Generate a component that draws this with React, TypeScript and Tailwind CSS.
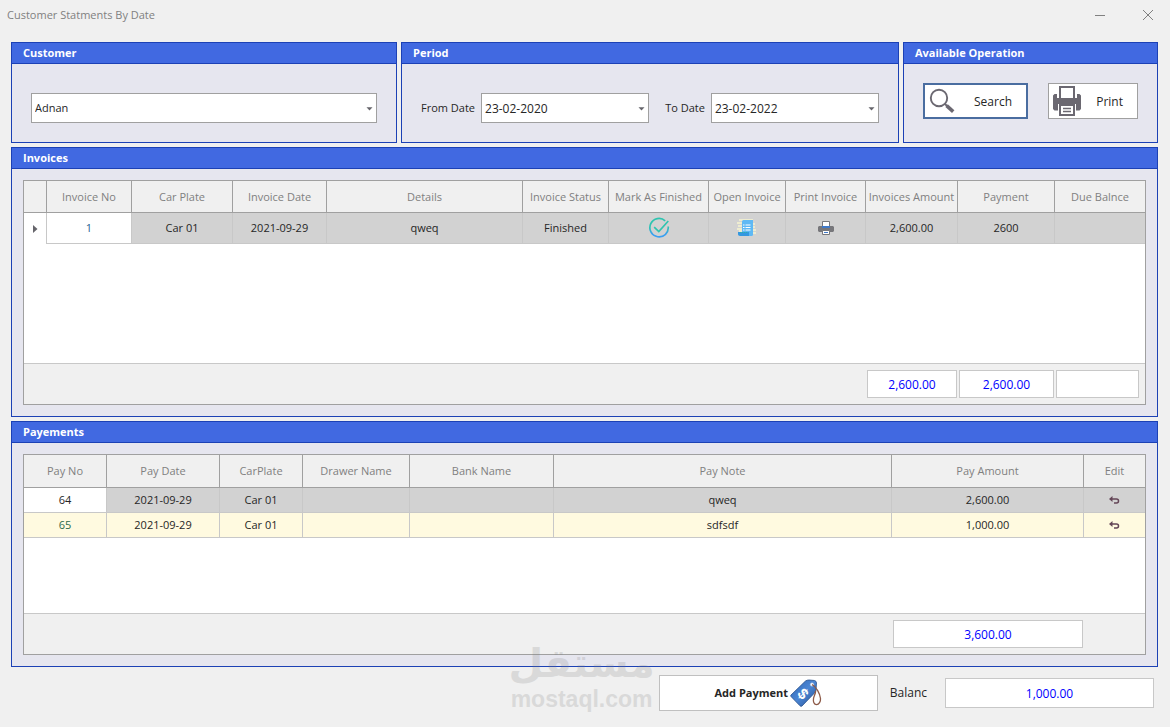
import React, { useState } from "react";

interface Column {
  title: string;
  width?: number;
}

const invoiceColumns: Column[] = [
  { title: "", width: 23 },
  { title: "Invoice No", width: 85 },
  { title: "Car Plate", width: 101 },
  { title: "Invoice Date", width: 94 },
  { title: "Details" },
  { title: "Invoice Status", width: 86 },
  { title: "Mark As Finished", width: 100 },
  { title: "Open Invoice", width: 77 },
  { title: "Print Invoice", width: 80 },
  { title: "Invoices Amount", width: 92 },
  { title: "Payment", width: 97 },
  { title: "Due Balnce", width: 90 },
];

const paymentColumns: Column[] = [
  { title: "Pay No", width: 83 },
  { title: "Pay Date", width: 113 },
  { title: "CarPlate", width: 83 },
  { title: "Drawer Name", width: 107 },
  { title: "Bank Name", width: 144 },
  { title: "Pay Note" },
  { title: "Pay Amount", width: 192 },
  { title: "Edit", width: 61 },
];

const payments = [
  { no: "64", date: "2021-09-29", plate: "Car 01", note: "qweq", amount: "2,600.00" },
  { no: "65", date: "2021-09-29", plate: "Car 01", note: "sdfsdf", amount: "1,000.00" },
];

/* ---------- icons ---------- */

const Caret = () => (
  <svg
    width="7"
    height="4"
    viewBox="0 0 7 4"
    className="pointer-events-none absolute right-1 top-1/2 -mt-px"
  >
    <path d="M0.5 0.3h6L3.5 3.5z" fill="#66656b" />
  </svg>
);

const SearchIcon = () => (
  <svg width="26" height="26" viewBox="0 0 26 26" fill="none" stroke="#6b6871">
    <circle cx="10" cy="10" r="8.2" strokeWidth="1.9" />
    <path d="M15.8 15.8l2.6 2.6" strokeWidth="2" />
    <path d="M17.6 17.6l6.6 6" strokeWidth="3.6" />
  </svg>
);

const PrinterIcon = () => (
  <svg width="28" height="30" viewBox="0 0 28 30">
    <path d="M0 9.5l1.5-1.5H4v5h20V8h2.5L28 9.500V23l-1.500 1.500H1.500L0 23z" fill="#6b6871" />
    <path d="M7 12V1h14v11" fill="#fff" stroke="#6b6871" strokeWidth="2" />
    <path d="M4 12h20v2H4z" fill="#6b6871" />
    <path d="M5 18h18v12H5z" fill="#fff" />
    <path d="M7 19h14v10H7z" fill="#fff" stroke="#6b6871" strokeWidth="2" />
    <path d="M10 22.500h8M10 25.500h8" stroke="#6b6871" strokeWidth="1.400" />
  </svg>
);

const CheckIcon = () => (
  <svg width="22" height="22" viewBox="0 0 22 22" fill="none">
    <defs>
      <linearGradient id="check" x1="0" y1="0" x2="0" y2="1">
        <stop offset="0.45" stopColor="#2ec4b0" />
        <stop offset="0.85" stopColor="#3a9ff0" />
      </linearGradient>
    </defs>
    <path
      d="M17.200 3.800A9.200 9.200 0 1 0 20.200 9.500"
      stroke="url(#check)"
      strokeWidth="1.700"
    />
    <path d="M6.200 10.200l4.600 4.300L20.300 4" stroke="#2ec4b0" strokeWidth="1.700" />
  </svg>
);

const InvoiceIcon = () => (
  <svg width="20" height="18" viewBox="0 0 20 18">
    <path
      d="M2 1h14M0 4h5M1 7h4M0 10h5M2 12h3M15 5h3M15 8h3M15 11h4M15 14h4"
      stroke="#f7f5cf"
      strokeWidth="1.600"
    />
    <path d="M5 2.500Q5 1 6.500 1H16v14.500q0 1.500-1.500 1.500H5z" fill="#5fb9f4" />
    <path d="M1 13h11v4H3q-2 0-2-2z" fill="#3498e0" />
    <path d="M3 13.500h8" stroke="#2bb5a8" strokeWidth="1" strokeDasharray="1 1" />
    <path d="M6 6h1.500M6 8.500h1.500M6 11h1.500M8.500 6h5M8.500 8.500h5M8.500 11h5" stroke="#fff" />
  </svg>
);

const SmallPrinterIcon = () => (
  <svg width="16" height="14" viewBox="0 0 16 14">
    <path d="M0 6l1-1h14l1 1v4l-1 1H1l-1-1z" fill="#77777b" />
    <path d="M4.500 0.500h7V7h-7z" fill="#fff" stroke="#77777b" />
    <path d="M4 5h8v2H4z" fill="#3f79c8" />
    <path d="M4.500 9.500h7v4h-7z" fill="#fff" stroke="#77777b" />
    <path d="M6 11.500h4" stroke="#3f79c8" />
  </svg>
);

const UndoIcon = () => (
  <svg width="11" height="8" viewBox="0 0 11 8">
    <path d="M0 3L3.500 0v6z" fill="#644657" />
    <path d="M2.500 3h5Q9.500 3 9.500 5T7.500 7H5" fill="none" stroke="#644657" strokeWidth="1.500" />
  </svg>
);

const TagIcon = () => (
  <svg width="32" height="28" viewBox="0 0 32 28">
    <defs>
      <linearGradient id="tag" x1="0" y1="0" x2="1" y2="1">
        <stop offset="0" stopColor="#2f66b4" />
        <stop offset="0.500" stopColor="#4b86d4" />
        <stop offset="1" stopColor="#244f94" />
      </linearGradient>
    </defs>
    <path
      d="M1 16L15.500 2Q17 1 19 1l5.500.5q2 .5 2 2.500l-.5 7q0 1.500-1.500 3L12 27q-1 .8-2-.2L1 17.500q-.6-.8 0-1.500z"
      fill="url(#tag)"
      stroke="#274f8c"
      strokeWidth="0.800"
    />
    <text
      x="13"
      y="20"
      textAnchor="middle"
      transform="rotate(45 13 15)"
      fill="#fff"
      fontFamily="Liberation Sans, sans-serif"
      fontWeight="bold"
      fontSize="15"
    >
      $
    </text>
    <circle cx="22" cy="5.500" r="1.700" fill="#fff" stroke="#a9bcd8" strokeWidth="0.600" />
    <path
      d="M22 5.500c4 2 8 9 8.500 14 .3 3-1.500 6-4 6.200-2.500 0-3.500-3-3-6 .4-3 2.500-5 2-8"
      fill="none"
      stroke="#8d5a48"
      strokeWidth="1.300"
    />
  </svg>
);

/* ---------- building blocks ---------- */

interface PanelProps {
  title: string;
  children: React.ReactNode;
}

const Panel: React.FC<PanelProps> = ({ title, children }) => (
  <section className="border border-[#1c41b5] bg-[#e6e6ef]">
    <h2 className="h-[21px] border-b border-[#1c41b5] bg-[#4169e1] px-[11px] text-[11px] font-bold leading-5 text-white">
      {title}
    </h2>
    {children}
  </section>
);

const HeaderRow: React.FC<{ columns: Column[]; height: string }> = ({ columns, height }) => (
  <>
    <colgroup>
      {columns.map((col) => (
        <col key={col.title} style={{ width: col.width }} />
      ))}
    </colgroup>
    <thead>
      <tr className={`${height} bg-[#f0f0f0] text-[#808080]`}>
        {columns.map((col) => (
          <th
            key={col.title}
            className="whitespace-nowrap border-b border-r border-[#a0a0a0] p-0 pt-px text-center font-normal last:border-r-0"
          >
            {col.title}
          </th>
        ))}
      </tr>
    </thead>
  </>
);

const Cell: React.FC<{ className?: string; children?: React.ReactNode }> = ({
  className = "",
  children,
}) => (
  <td className={`border-b border-r border-[#c8c8c8] p-0 text-center last:border-r-0 ${className}`}>
    {children}
  </td>
);

const IconButton: React.FC<{ label: string; children: React.ReactNode }> = ({
  label,
  children,
}) => (
  <button type="button" aria-label={label} className="block w-full">
    <span className="flex justify-center">{children}</span>
  </button>
);

const Total: React.FC<{ label: string; value: string; className: string }> = ({
  label,
  value,
  className,
}) => (
  <input
    readOnly
    aria-label={label}
    value={value}
    className={`border border-[#c8c8c8] bg-white text-center text-xs text-[#0000ff] outline-none ${className}`}
  />
);

interface DateFieldProps {
  id: string;
  label: string;
  value: string;
  onChange: (value: string) => void;
}

const DateField: React.FC<DateFieldProps> = ({ id, label, value, onChange }) => (
  <div className="flex flex-auto items-center gap-1.5">
    <label htmlFor={id} className="whitespace-nowrap">
      {label}
    </label>
    <div className="relative flex-auto">
      <input
        id={id}
        size={10}
        value={value}
        onChange={(e) => onChange(e.target.value)}
        className="h-[30px] w-full border border-[#a0a0a0] bg-white px-[3px] text-xs outline-none"
      />
      <Caret />
    </div>
  </div>
);

const App: React.FC = () => {
  const [customer, setCustomer] = useState("Adnan");
  const [from, setFrom] = useState("23-02-2020");
  const [to, setTo] = useState("23-02-2022");

  return (
    <div className="min-h-screen bg-[#f0f0f0] pl-[11px] pr-3 font-['Open_Sans','Noto_Sans',sans-serif] text-[11px] text-[#262626]">
      {/* Title bar */}
      <header className="-ml-1 flex h-[42px] justify-between pr-1 pt-[7px] text-[#808080]">
        <h1 className="leading-4">Customer Statments By Date</h1>
        <div className="flex h-4 items-center gap-9 text-[#808080]">
          <button type="button" aria-label="Minimize">
            <svg width="12" height="12" viewBox="0 0 12 12" stroke="currentColor">
              <path d="M1 6.500h10" />
            </svg>
          </button>
          <button type="button" aria-label="Close">
            <svg width="12" height="12" viewBox="0 0 12 12" stroke="currentColor">
              <path d="M1 1l10 10M11 1L1 11" />
            </svg>
          </button>
        </div>
      </header>

      <main className="flex flex-col gap-1">
        <div className="grid grid-cols-[386fr_498fr_255fr] gap-1">
          <Panel title="Customer">
            <div className="px-[19px] pb-[19px] pt-[29px]">
              <div className="relative">
                <select
                  aria-label="Customer"
                  value={customer}
                  onChange={(e) => setCustomer(e.target.value)}
                  className="block h-[30px] w-full appearance-none border border-[#a0a0a0] bg-white px-[3px] outline-none"
                >
                  <option>Adnan</option>
                </select>
                <Caret />
              </div>
            </div>
          </Panel>

          <Panel title="Period">
            <div className="flex gap-4 px-[19px] pb-[19px] pt-[29px]">
              <DateField id="from" label="From Date" value={from} onChange={setFrom} />
              <DateField id="to" label="To Date" value={to} onChange={setTo} />
            </div>
          </Panel>

          <Panel title="Available Operation">
            <div className="flex justify-between px-[19px] pt-[19px] text-xs">
              <button
                type="button"
                className="flex h-9 w-[105px] items-center justify-between border-2 border-[#4a6da0] bg-white pl-1 pr-3.5"
              >
                <SearchIcon />
                <span className="pt-0.5">Search</span>
              </button>
              <button
                type="button"
                className="flex h-9 w-[90px] items-center justify-between border border-[#a0a0a0] bg-white pl-1 pr-3.5"
              >
                <PrinterIcon />
                <span className="pt-0.5">Print</span>
              </button>
            </div>
          </Panel>
        </div>

        <Panel title="Invoices">
          <div className="m-[11px] border border-[#a0a0a0] bg-white">
            <div className="min-h-[182px]">
              <table className="w-full table-fixed border-separate border-spacing-0">
                <HeaderRow columns={invoiceColumns} height="h-8" />
                <tbody>
                  <tr className="h-[31px] bg-[#d2d2d2]">
                    <td className="border-r border-[#c8c8c8] bg-white p-0">
                      <svg width="5" height="8" viewBox="0 0 5 8" className="mx-auto">
                        <path d="M0 0l4.500 4L0 8z" fill="#66656b" />
                      </svg>
                    </td>
                    <Cell className="bg-white text-[#1f5f8f]">1</Cell>
                    <Cell>Car 01</Cell>
                    <Cell>2021-09-29</Cell>
                    <Cell>qweq</Cell>
                    <Cell>Finished</Cell>
                    <Cell>
                      <IconButton label="Mark as finished">
                        <CheckIcon />
                      </IconButton>
                    </Cell>
                    <Cell>
                      <IconButton label="Open invoice">
                        <InvoiceIcon />
                      </IconButton>
                    </Cell>
                    <Cell>
                      <IconButton label="Print invoice">
                        <SmallPrinterIcon />
                      </IconButton>
                    </Cell>
                    <Cell>2,600.00</Cell>
                    <Cell>2600</Cell>
                    <Cell />
                  </tr>
                </tbody>
              </table>
            </div>
            <div className="flex justify-end gap-0.5 border-t border-[#c8c8c8] bg-[#f0f0f0] p-1.5">
              <Total label="Invoices total" value="2,600.00" className="h-7 w-[90px]" />
              <Total label="Payments total" value="2,600.00" className="h-7 w-[95px]" />
              <Total label="Due total" value="" className="h-7 w-[83px]" />
            </div>
          </div>
        </Panel>

        <Panel title="Payements">
          <div className="m-[11px] border border-[#a0a0a0] bg-white">
            <div className="min-h-[158px]">
              <table className="w-full table-fixed border-separate border-spacing-0">
                <HeaderRow columns={paymentColumns} height="h-[33px]" />
                <tbody>
                  {payments.map((pay, index) => (
                    <tr
                      key={pay.no}
                      className={`h-[25px] ${index === 0 ? "bg-[#d2d2d2]" : "bg-[#fffae0]"}`}
                    >
                      <Cell className={index === 0 ? "bg-white" : "text-[#2c6a4c]"}>{pay.no}</Cell>
                      <Cell>{pay.date}</Cell>
                      <Cell>{pay.plate}</Cell>
                      <Cell />
                      <Cell />
                      <Cell>{pay.note}</Cell>
                      <Cell>{pay.amount}</Cell>
                      <Cell>
                        <IconButton label={`Edit payment ${pay.no}`}>
                          <UndoIcon />
                        </IconButton>
                      </Cell>
                    </tr>
                  ))}
                </tbody>
              </table>
            </div>
            <div className="flex justify-end border-t border-[#c8c8c8] bg-[#f0f0f0] py-1.5 pr-[62px]">
              <Total label="Payments sum" value="3,600.00" className="h-7 w-[190px]" />
            </div>
          </div>
        </Panel>
      </main>

      <footer className="flex items-center justify-end pb-4 pr-1 pt-2">
        <div className="relative">
          {/* Site watermark, laid over the panel's bottom edge */}
          <div className="pointer-events-none absolute bottom-0 right-full mr-1 flex flex-col items-center text-[#808080] opacity-20">
            <span
              lang="ar"
              dir="rtl"
              className="font-['DejaVu_Sans',sans-serif] text-[40px] font-bold leading-[48px]"
            >
              مستقل
            </span>
            <span className="font-['Liberation_Sans',sans-serif] text-[23px] font-bold leading-6">
              mostaql.com
            </span>
          </div>
          <button
            type="button"
            className="flex h-9 w-[219px] items-center justify-center gap-0.5 border border-[#c0c0c0] bg-white font-bold"
          >
            Add Payment
            <TagIcon />
          </button>
        </div>
        <label htmlFor="balance" className="ml-3 mr-[18px] text-xs">
          Balanc
        </label>
        <input
          id="balance"
          readOnly
          value="1,000.00"
          className="h-[30px] w-[209px] border border-[#c8c8c8] bg-white text-center text-xs text-[#0000ff] outline-none"
        />
      </footer>
    </div>
  );
};

export default App;
